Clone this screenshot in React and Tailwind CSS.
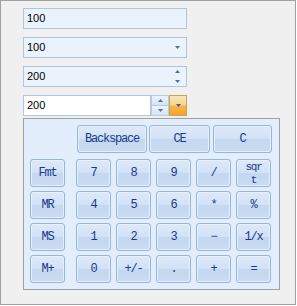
import React from "react";

const Arrow = ({ up = false, color = "#4d6fa8" }) => (
  <svg width="5" height="3" viewBox="0 0 5 3" className="block">
    {up ? (
      <path d="M0 3 L5 3 L2.5 0 Z" fill={color} />
    ) : (
      <path d="M0 0 L5 0 L2.5 3 Z" fill={color} />
    )}
  </svg>
);

const field =
  "w-[164px] h-[21px] border border-[#aec4df] bg-[#eaf2fc] flex items-center pl-[3px] text-[11px] text-black";

function Key({ label, w = "w-[35px]", className = "" }) {
  return (
    <button
      className={`${w} h-[28px] shrink-0 rounded-[3px] border border-[#98b5de] bg-[linear-gradient(#dde9f8_0%,#d2e2f6_48%,#c4d8f1_52%,#cadcf3_100%)] shadow-[inset_0_0_0_1px_#e6effa] text-[#17398c] text-[12px] leading-[14px] tracking-[-1.2px] flex items-center justify-center text-center px-[2px] ${className}`}
      style={{ fontFamily: '"Liberation Mono", "Courier New", monospace' }}
    >
      {label}
    </button>
  );
}

const rows = [
  ["Fmt", "7", "8", "9", "/", "sqrt"],
  ["MR", "4", "5", "6", "*", "%"],
  ["MS", "1", "2", "3", "\u2212", "1/x"],
  ["M+", "0", "+/-", ".", "+", "="],
];

export default function App() {
  return (
    <div
      className="w-[296px] h-[305px] border border-[#a0a0a0] bg-[#f0f0f0] pl-[22px] pt-[7px]"
      style={{ fontFamily: '"Liberation Sans", Arial, sans-serif' }}
    >
      <div className="flex flex-col gap-[8px]">
        <div className={field}>100</div>
        <div className={`${field} justify-between pr-[6px]`}>
          <span>100</span>
          <Arrow />
        </div>
        <div className={`${field} justify-between pr-[6px]`}>
          <span>200</span>
          <div className="flex flex-col gap-[7px]">
            <Arrow up />
            <Arrow />
          </div>
        </div>
        <div className="flex h-[21px] w-[164px]">
          <div className="w-[128px] h-full border border-[#aec4df] bg-white flex items-center pl-[3px] text-[11px] text-black">
            200
          </div>
          <div className="w-[18px] h-full flex flex-col">
            <div className="h-[11px] border border-[#b8cbe3] bg-[linear-gradient(#eef4fb,#d4e2f2)] flex items-center justify-center">
              <Arrow up />
            </div>
            <div className="h-[10px] border border-t-0 border-[#b8cbe3] bg-[linear-gradient(#eef4fb,#d4e2f2)] flex items-center justify-center">
              <Arrow />
            </div>
          </div>
          <div className="w-[18px] h-full border border-[#c2a765] bg-[linear-gradient(#f6e7c0_0%,#fbd58a_45%,#fbb347_55%,#f8a22a_100%)] flex items-center justify-center">
            <Arrow color="#3f5f9c" />
          </div>
        </div>
      </div>

      <div className="mt-[2px] w-[257px] h-[172px] border border-[#a0a0a0] bg-[#e3eefc] pl-[6px] pt-[6px]">
        <div className="flex mb-[6px] pl-[47px]">
          <Key label="Backspace" w="w-[70px]" />
          <Key label="CE" w="w-[61px]" className="ml-[2px]" />
          <Key label="C" w="w-[59px]" className="ml-[3px]" />
        </div>
        <div className="flex flex-col gap-[4px]">
          {rows.map((r) => (
            <div key={r[0]} className="flex">
              <Key label={r[0]} className="mr-[11px]" />
              <div className="flex gap-[5px]">
                {r.slice(1).map((k) =>
                  k === "sqrt" ? (
                    <Key
                      key={k}
                      label={
                        <span className="flex flex-col text-[11px] leading-[12px] gap-[1px]">
                          <span>sqr</span>
                          <span>t</span>
                        </span>
                      }
                    />
                  ) : (
                    <Key key={k} label={k} />
                  )
                )}
              </div>
            </div>
          ))}
        </div>
      </div>
    </div>
  );
}
